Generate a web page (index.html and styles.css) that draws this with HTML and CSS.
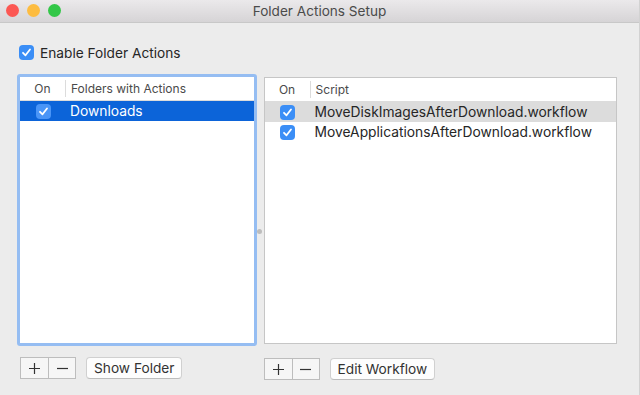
FILE: index.html
```html
<!DOCTYPE html>
<html>

<head>
    <title>Folder Actions Setup</title>
    <meta charset="utf-8">
    <link rel="stylesheet" href="styles.css">
</head>

<body>
    <div class="window">
        <header class="titlebar">
            <div class="lights">
                <span class="light red"></span>
                <span class="light yellow"></span>
                <span class="light green"></span>
            </div>
            <h1>Folder Actions Setup</h1>
        </header>

        <main class="content">
            <label class="enable">
                <span class="check"><svg viewBox="0 0 15 15"><polyline points="4,7.8 6.5,10.3 11,4.5" /></svg></span>
                Enable Folder Actions
            </label>

            <div class="panes">
                <!-- venstre: mapper -->
                <section class="pane pane-left">
                    <div class="table focus">
                        <div class="thead">
                            <span class="col-on">On</span>
                            <span class="col-name">Folders with Actions</span>
                        </div>
                        <div class="row selected">
                            <span class="col-on"><span class="check"><svg viewBox="0 0 15 15"><polyline points="4,7.8 6.5,10.3 11,4.5" /></svg></span></span>
                            <span class="col-name">Downloads</span>
                        </div>
                    </div>
                    <div class="toolbar">
                        <div class="segmented">
                            <button><svg viewBox="0 0 13 13"><path d="M6.5 1v11M1 6.5h11" /></svg></button>
                            <button><svg viewBox="0 0 13 13"><path d="M1 6.5h11" /></svg></button>
                        </div>
                        <button class="push">Show Folder</button>
                    </div>
                </section>

                <div class="splitter"><span class="dot"></span></div>

                <!-- højre: scripts -->
                <section class="pane pane-right">
                    <div class="table">
                        <div class="thead">
                            <span class="col-on">On</span>
                            <span class="col-name">Script</span>
                        </div>
                        <div class="row hilite">
                            <span class="col-on"><span class="check"><svg viewBox="0 0 15 15"><polyline points="4,7.8 6.5,10.3 11,4.5" /></svg></span></span>
                            <span class="col-name">MoveDiskImagesAfterDownload.workflow</span>
                        </div>
                        <div class="row">
                            <span class="col-on"><span class="check"><svg viewBox="0 0 15 15"><polyline points="4,7.8 6.5,10.3 11,4.5" /></svg></span></span>
                            <span class="col-name">MoveApplicationsAfterDownload.workflow</span>
                        </div>
                    </div>
                    <div class="toolbar">
                        <div class="segmented">
                            <button><svg viewBox="0 0 13 13"><path d="M6.5 1v11M1 6.5h11" /></svg></button>
                            <button><svg viewBox="0 0 13 13"><path d="M1 6.5h11" /></svg></button>
                        </div>
                        <button class="push">Edit Workflow</button>
                    </div>
                </section>
            </div>
        </main>
    </div>
</body>

</html>
```

FILE: styles.css
```css
body {
    margin: 0;
    background-color: #ececec;
    font-family: 'Inter', 'Liberation Sans', sans-serif;
    font-size: 13px;
    color: #262626;
}

.window {
    width: 639px;
    height: 395px;
    border-right: 1px solid #d2d2d2;
    display: flex;
    flex-direction: column;
}

/* titelbjælke */
.titlebar {
    height: 22px;
    border-bottom: 1px solid #c8c8c8;
    background: linear-gradient(#ebe9eb, #d6d4d6);
    display: flex;
    align-items: center;
    justify-content: center;
    position: relative;
}

.titlebar h1 {
    margin: 0;
    font-size: 13.6px;
    font-weight: normal;
    color: #4b4b4b;
}

.lights {
    position: absolute;
    left: 6px;
    top: 4px;
    display: flex;
    gap: 8px;
}

.light {
    width: 13px;
    height: 13px;
    border-radius: 50%;
}

.red {
    background-color: #fc5753;
}

.yellow {
    background-color: #fdbc40;
}

.green {
    background-color: #33c748;
}

.content {
    flex: 1;
    padding: 22px 22px 0 17px;
    display: flex;
    flex-direction: column;
}

.enable {
    display: flex;
    align-items: center;
    gap: 6px;
    margin-left: 2px;
    height: 15px;
    font-size: 13.7px;
}

.check {
    display: inline-block;
    width: 15px;
    height: 15px;
    border-radius: 4px;
    background-color: #3b8ef6;
}

.check svg {
    display: block;
    width: 15px;
    height: 15px;
}

.check polyline {
    fill: none;
    stroke: white;
    stroke-width: 1.8;
    stroke-linecap: round;
    stroke-linejoin: round;
}

.panes {
    display: flex;
    margin-top: 14px;
}

.pane {
    display: flex;
    flex-direction: column;
}

.pane-left {
    width: 240px;
}

.pane-right {
    width: 354px;
    padding-top: 3px;
}

.splitter {
    width: 7px;
    display: flex;
    align-items: center;
    justify-content: center;
}

.dot {
    width: 5px;
    height: 5px;
    margin-left: -2px;
    margin-top: 8px;
    border-radius: 50%;
    background-color: #bdbdbd;
}

.table {
    background-color: white;
    border: 1px solid #c6c6c6;
    height: 265px;
}

.table.focus {
    border: 3px solid #95bdf2;
    border-radius: 3px;
    height: 266px;
}

.thead {
    height: 23px;
    border-bottom: 1px solid #dcdcdc;
    display: flex;
    align-items: center;
    font-size: 12px;
    color: #4a4a4a;
}

.col-on {
    width: 46px;
    flex: none;
    display: flex;
    justify-content: center;
}

.thead .col-on {
    height: 17px;
    align-items: center;
    border-right: 1px solid #dcdcdc;
    width: 45px;
}

.thead .col-name {
    padding-left: 5px;
}

.row {
    height: 20px;
    display: flex;
    align-items: center;
    font-size: 13.8px;
}

.row .col-name {
    padding-left: 4px;
}

.selected {
    background-color: #0c64d9;
    color: white;
}

.selected .check {
    background-color: #4a95f7;
}

.hilite {
    background-color: #dcdcdc;
}

.toolbar {
    display: flex;
    gap: 10px;
    margin-top: 11px;
    padding-left: 3px;
}

.pane-right .toolbar {
    padding-left: 0;
    margin-top: 14px;
}

.segmented {
    display: flex;
    border: 1px solid #bdbdbd;
    background-color: #f6f6f6;
    height: 20px;
}

.segmented button {
    width: 27px;
    height: 20px;
    border: none;
    background: none;
    padding: 0;
    display: flex;
    align-items: center;
    justify-content: center;
}

.segmented button + button {
    border-left: 1px solid #bdbdbd;
}

.segmented svg {
    width: 13px;
    height: 13px;
}

.segmented path {
    stroke: #333;
    stroke-width: 1.2;
    fill: none;
}

.push {
    height: 22px;
    padding: 0 7px;
    border: 1px solid #d0d0d0;
    border-bottom-color: #bdbdbd;
    border-radius: 4px;
    background-color: #fdfdfd;
    font-family: inherit;
    font-size: 13.7px;
    color: #333;
}
```
